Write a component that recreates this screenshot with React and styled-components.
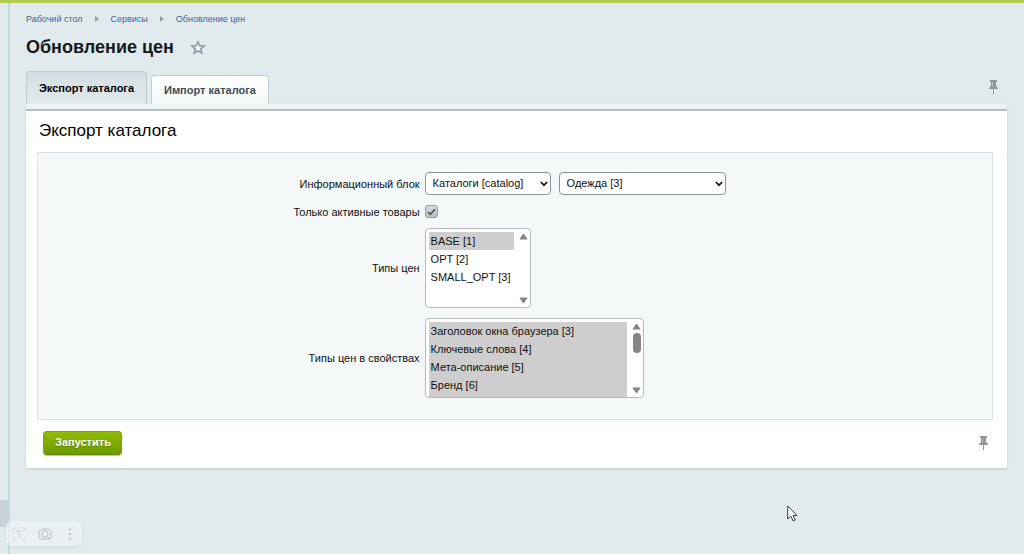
import React from "react";
import styled, { createGlobalStyle, css } from "styled-components";

const GlobalStyle = createGlobalStyle`
  * { box-sizing: border-box; }
  body {
    margin: 0;
    background: #e1eaec;
    color: #111;
    font: 11px/16px "Liberation Sans", Arial, sans-serif;
  }
`;

const Page = styled.div`
  display: flex;
  position: relative;
  min-height: 100vh;
  border-top: 3px solid #b6cb54;
`;

const Rail = styled.aside`
  display: flex;
  flex-direction: column;
  justify-content: flex-end;
  flex: none;
  width: 10px;
  padding-bottom: 27px;
  border-right: 2px solid #c6d7dc;
`;

const RailHandle = styled.div`
  height: 27px;
  background: #c8d3d8;
`;

const Main = styled.main`
  flex: 1;
  min-width: 0;
  padding: 8px 17px 24px 16px;
`;

const Breadcrumbs = styled.nav`
  display: flex;
  align-items: center;
  gap: 12px;
  font-size: 9px;
  line-height: 16px;

  a {
    color: #45649c;
    text-decoration: none;
  }
`;

const TitleRow = styled.div`
  display: flex;
  align-items: center;
  gap: 16px;
  margin-top: 8px;
`;

const Title = styled.h1`
  margin: 0;
  font-size: 18px;
  line-height: 24px;
  color: #16191c;
`;

const IconButton = styled.button`
  display: flex;
  padding: 0;
  border: 0;
  background: none;
`;

const TabRow = styled.div`
  display: flex;
  align-items: flex-end;
  gap: 4px;
  margin-top: 12px;
  padding-right: 9px;

  > :last-child {
    margin: 0 0 10px auto;
  }
`;

const Tab = styled.button`
  height: 29px;
  padding: 0 12px 1px;
  border: 1px solid #c3ced2;
  border-bottom: 0;
  border-radius: 4px 4px 0 0;
  background: linear-gradient(#fff, #f3f6f7);
  color: #3f4b54;
  font: bold 11px/16px "Liberation Sans", Arial, sans-serif;
  ${(p) =>
    p.$active &&
    css`
      height: 33px;
      border-color: #c0cbd0;
      background: linear-gradient(#d5dfe3, #e0e9ec);
      color: #000;
    `}
`;

const Panel = styled.section`
  border-top: 5px solid #edf3f5;
  background: #fff;
  box-shadow: 0 1px 2px #bfcacd;
`;

const PanelBody = styled.div`
  padding: 10px 14px 13px 11px;
  border-top: 2px solid #b3bec2;
`;

const PanelTitle = styled.h2`
  margin: 0 2px 11px;
  font-size: 17px;
  font-weight: normal;
  line-height: 20px;
  color: #000;
`;

const Form = styled.form`
  margin: 0;
`;

const Fields = styled.div`
  display: flex;
  flex-direction: column;
  gap: 10px;
  padding: 19px 0 21px;
  border: 1px solid #dce5e8;
  border-top-color: #d8dfe2;
  background: #f4f8f9;
`;

const Field = styled.div`
  display: grid;
  grid-template-columns: 40% 1fr;
  align-items: center;
  column-gap: 5px;

  > label {
    line-height: 12px;
    text-align: right;
  }
`;

const Controls = styled.div`
  display: flex;
  align-items: center;
  gap: 8px;
`;

const SelectBox = styled.span`
  position: relative;
  display: flex;
  width: ${(p) => p.$width}px;
`;

const Select = styled.select`
  appearance: none;
  width: 100%;
  height: 23px;
  padding: 0 20px 1px 7px;
  border: 1px solid #8d9498;
  border-radius: 4px;
  background: #fff;
  color: #111;
  font: 11px/16px "Liberation Sans", Arial, sans-serif;
`;

const SelectArrow = styled.svg`
  position: absolute;
  right: 3px;
  top: 9px;
  pointer-events: none;
`;

const ListFrame = styled.span`
  display: flex;
  width: ${(p) => p.$width}px;
  height: 80px;
  padding: 3px 0 0 3px;
  overflow: hidden;
  border: 1px solid #b4babd;
  border-radius: 4px;
  background: #fff;
`;

const List = styled.select`
  flex: 1;
  min-width: 0;
  height: 76px;
  padding: 0;
  overflow-y: scroll;
  scrollbar-width: none;
  border: 0;
  border-radius: 0;
  outline: 0;
  background: #fff;
  font: 11px/18px "Liberation Sans", Arial, sans-serif;

  option {
    height: 18px;
    padding: 3px 2px 2px;
    color: #111;
  }
  option:checked {
    background: #cecece;
    color: #111;
  }
`;

const ScrollTrack = styled.span`
  display: flex;
  flex-direction: column;
  align-items: center;
  flex: none;
  gap: 3px;
  width: 16px;
  padding: 1px 0 3px 4px;

  > :last-child {
    margin-top: auto;
  }
`;

const ScrollThumb = styled.span`
  width: 8px;
  height: 20px;
  border-radius: 4px;
  background: #858585;
`;

const Checkbox = styled.input`
  appearance: none;
  width: 13px;
  height: 13px;
  margin: 0;
  border: 1px solid #949ca0;
  border-radius: 3px;
  background: linear-gradient(#d5dbde, #b7bfc3);
`;

const CheckBoxWrap = styled.span`
  position: relative;
  display: flex;

  svg {
    position: absolute;
    left: 2px;
    top: 3px;
    pointer-events: none;
  }
`;

const Actions = styled.div`
  display: flex;
  align-items: center;
  justify-content: space-between;
  padding: 11px 5px 0 6px;
`;

const SubmitButton = styled.button`
  height: 24px;
  padding: 0 10px 2px 11px;
  border: 1px solid #79a200;
  border-bottom-color: #5f8700;
  border-radius: 4px;
  background: linear-gradient(#92bb00, #6d9b00);
  box-shadow: 0 1px 1px #b9c59a;
  color: #fff;
  font: bold 11px/16px "Liberation Sans", Arial, sans-serif;
  text-shadow: 0 1px 1px #557800;
`;

const CaptureBar = styled.div`
  position: absolute;
  left: 6px;
  bottom: 8px;
  display: flex;
  align-items: center;
  gap: 12px;
  height: 25px;
  padding: 0 6px;
  border-radius: 6px;
  background: rgba(240, 243, 246, 0.7);
  box-shadow: 0 1px 3px rgba(120, 140, 150, 0.15);
`;

const Pointer = styled.svg`
  position: absolute;
  left: 77%;
  bottom: 32px;
  margin-left: -1px;
  pointer-events: none;
`;

const CrumbArrow = () => (
  <svg width="4" height="6" viewBox="0 0 4 6" aria-hidden="true">
    <path d="M0 0L4 3L0 6Z" fill="#929da6" />
  </svg>
);

const PinIcon = () => (
  <svg width="9" height="14" viewBox="0 0 9 14" aria-hidden="true">
    <path d="M1 0H8V2H7V6L9 8V9H5V14H4V9H0V8L2 6V2H1Z" fill="#8d979c" />
    <path d="M3 2H4V7H3Z" fill="#b2bcc0" />
  </svg>
);

const ScrollArrow = ({ down }) => (
  <svg width="9" height="7" viewBox="0 0 9 7" aria-hidden="true">
    <path
      d={down ? "M1.2 1H7.8L4.5 5.7Z" : "M1.2 6H7.8L4.5 1.3Z"}
      fill="#858585"
      stroke="#858585"
      strokeWidth="1.2"
      strokeLinejoin="round"
    />
  </svg>
);

function DropDown({ id, label, width, options }) {
  return (
    <SelectBox $width={width}>
      <Select id={id} aria-label={label}>
        {options.map((o) => (
          <option key={o}>{o}</option>
        ))}
      </Select>
      <SelectArrow width="8" height="6" viewBox="0 0 8 6" aria-hidden="true">
        <path d="M0.8 1L4 4.2L7.2 1" fill="none" stroke="#111" strokeWidth="1.7" />
      </SelectArrow>
    </SelectBox>
  );
}

function ListBox({ id, width, options, selected, thumb }) {
  return (
    <ListFrame $width={width}>
      <List id={id} multiple size={4} defaultValue={selected}>
        {options.map((o) => (
          <option key={o} value={o}>
            {o}
          </option>
        ))}
      </List>
      <ScrollTrack>
        <ScrollArrow />
        {thumb && <ScrollThumb />}
        <ScrollArrow down />
      </ScrollTrack>
    </ListFrame>
  );
}

const priceTypes = ["BASE [1]", "OPT [2]", "SMALL_OPT [3]"];
const properties = [
  "Заголовок окна браузера [3]",
  "Ключевые слова [4]",
  "Мета-описание [5]",
  "Бренд [6]",
  "Новинка [7]",
];

export default function App() {
  return (
    <>
      <GlobalStyle />
      <Page>
        <Rail>
          <RailHandle />
        </Rail>
        <Main>
          <Breadcrumbs>
            <a href="#desktop">Рабочий стол</a>
            <CrumbArrow />
            <a href="#services">Сервисы</a>
            <CrumbArrow />
            <a href="#prices">Обновление цен</a>
          </Breadcrumbs>
          <TitleRow>
            <Title>Обновление цен</Title>
            <IconButton type="button" aria-label="В избранное">
              <svg width="16" height="15" viewBox="0 0 16 15" aria-hidden="true">
                <path
                  d="M8 1.8L9.7 5.6L14 6L10.8 8.8L11.8 13L8 10.8L4.2 13L5.2 8.8L2 6L6.3 5.6Z"
                  fill="#eff3f5"
                  stroke="#98a0aa"
                  strokeWidth="1.7"
                />
              </svg>
            </IconButton>
          </TitleRow>
          <TabRow>
            <Tab type="button" $active>
              Экспорт каталога
            </Tab>
            <Tab type="button">Импорт каталога</Tab>
            <IconButton type="button" aria-label="Закрепить вкладки">
              <PinIcon />
            </IconButton>
          </TabRow>
          <Panel>
            <PanelBody>
              <PanelTitle>Экспорт каталога</PanelTitle>
              <Form onSubmit={(e) => e.preventDefault()}>
                <Fields>
                  <Field>
                    <label htmlFor="iblock">Информационный блок</label>
                    <Controls>
                      <DropDown id="iblock" width={126} options={["Каталоги [catalog]"]} />
                      <DropDown
                        id="iblock-item"
                        label="Каталог"
                        width={167}
                        options={["Одежда [3]"]}
                      />
                    </Controls>
                  </Field>
                  <Field>
                    <label htmlFor="active">Только активные товары</label>
                    <Controls>
                      <CheckBoxWrap>
                        <Checkbox type="checkbox" id="active" defaultChecked />
                        <svg width="9" height="8" viewBox="0 0 9 8" aria-hidden="true">
                          <path
                            d="M1 4L3.4 6.3L8 1.2"
                            fill="none"
                            stroke="#4c5459"
                            strokeWidth="1.7"
                          />
                        </svg>
                      </CheckBoxWrap>
                    </Controls>
                  </Field>
                  <Field>
                    <label htmlFor="price-types">Типы цен</label>
                    <Controls>
                      <ListBox
                        id="price-types"
                        width={106}
                        options={priceTypes}
                        selected={["BASE [1]"]}
                      />
                    </Controls>
                  </Field>
                  <Field>
                    <label htmlFor="price-props">Типы цен в свойствах</label>
                    <Controls>
                      <ListBox
                        id="price-props"
                        width={219}
                        options={properties}
                        selected={properties}
                        thumb
                      />
                    </Controls>
                  </Field>
                </Fields>
                <Actions>
                  <SubmitButton type="submit">Запустить</SubmitButton>
                  <IconButton type="button" aria-label="Закрепить панель">
                    <PinIcon />
                  </IconButton>
                </Actions>
              </Form>
            </PanelBody>
          </Panel>
        </Main>
        <CaptureBar>
          <svg width="14" height="14" viewBox="0 0 14 14" fill="none" stroke="#d9cfdb" aria-hidden="true">
            <path d="M1 4V2.5Q1 1 2.5 1H4M10 1H11.5Q13 1 13 2.5V4M13 10V11.5Q13 13 11.5 13H10M4 13H2.5Q1 13 1 11.5V10M4 5V4H10V5M7 4V10M6 10H8" />
          </svg>
          <svg width="14" height="14" viewBox="0 0 14 14" fill="none" stroke="#b5bcc4" aria-hidden="true">
            <path d="M11 12H3Q1 12 1 10V5Q1 3.5 2.5 3.5L4 2H10L11.5 3.5Q13 3.5 13 5V10Q13 12 11 12M9.3 9.3L12 12" />
            <circle cx="7" cy="7" r="3.2" />
          </svg>
          <svg width="12" height="12" viewBox="0 0 12 12" fill="#aab2ba" aria-hidden="true">
            <circle cx="6" cy="1.5" r="1" />
            <circle cx="6" cy="6" r="1" />
            <circle cx="6" cy="10.5" r="1" />
          </svg>
        </CaptureBar>
        <Pointer width="11" height="17" viewBox="0 0 11 17" aria-hidden="true">
          <path
            d="M0.7 1V14L3.8 11.2L6.2 16L8.2 15L6 10.4H10Z"
            fill="#fff"
            stroke="#333a3e"
            strokeLinejoin="round"
          />
        </Pointer>
      </Page>
    </>
  );
}
